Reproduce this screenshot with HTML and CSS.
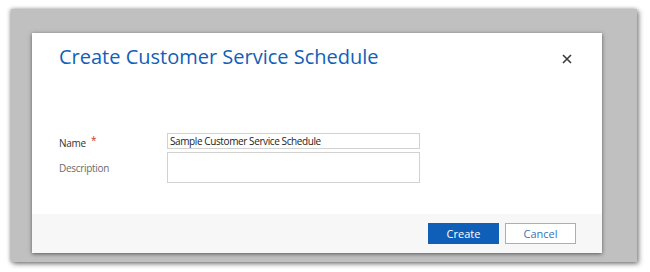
FILE: index.html
```html
<!DOCTYPE html>
<html>
<head>
<meta charset="utf-8">
<link rel="stylesheet" href="styles.css">
</head>
<body>
<div class="backdrop">
  <div class="dialog">
    <div class="dialog-body">
      <div class="header">
        <h1 class="title">Create Customer Service Schedule</h1>
        <button class="close" aria-label="Close">
          <svg width="10" height="10" viewBox="0 0 10 10"><path d="M1 1 L9 9 M9 1 L1 9" stroke="#3a3a3a" stroke-width="1.6" fill="none"/></svg>
        </button>
      </div>
      <div class="form">
        <div class="row">
          <label class="label label-required">Name <span class="req">*</span></label>
          <div class="input input-text">Sample Customer Service Schedule</div>
        </div>
        <div class="row">
          <label class="label label-muted">Description</label>
          <div class="input input-area"></div>
        </div>
      </div>
    </div>
    <div class="footer">
      <button class="btn btn-primary">Create</button>
      <button class="btn btn-secondary">Cancel</button>
    </div>
  </div>
</div>
</body>
</html>
```
FILE: styles.css
```css
html, body {
  margin: 0;
  padding: 0;
  background: #ffffff;
  width: 650px;
  height: 272px;
  overflow: hidden;
}
body {
  padding: 9px 13px 10px 11px;
  box-sizing: border-box;
  font-family: "Open Sans", "Noto Sans", sans-serif;
}
.backdrop {
  width: 626px;
  height: 253px;
  background: #c0c0c0;
  box-shadow: 2px 2px 5px rgba(0,0,0,0.45), -1px 0 4px rgba(0,0,0,0.3);
  box-sizing: border-box;
  padding: 24px 35px 9px 21px;
}
.dialog {
  width: 570px;
  height: 220px;
  background: #ffffff;
  box-shadow: 0 1px 4px rgba(0,0,0,0.55);
  display: flex;
  flex-direction: column;
}
.dialog-body {
  flex: 1;
  padding: 0 26px 0 27px;
}
.header {
  display: flex;
  justify-content: space-between;
  align-items: flex-start;
  padding-top: 9px;
}
.title {
  margin: 0;
  font-weight: 400;
  font-size: 20px;
  line-height: 30px;
  color: #1160b7;
}
.close {
  border: 0;
  background: none;
  padding: 0;
  margin: 12px 4px 0 0;
  width: 10px;
  height: 10px;
  display: flex;
}
.form {
  margin-top: 61px;
  display: flex;
  flex-direction: column;
  gap: 3px;
}
.row {
  display: flex;
  align-items: flex-start;
}
.label {
  width: 108px;
  font-size: 10px;
  line-height: 16px;
  letter-spacing: -0.3px;
}
.label-required {
  color: #333333;
  margin-top: 2px;
  margin-bottom: -2px;
}
.label-muted { color: #6b6b6b; padding-top: 8px; }
.req {
  color: #d0312d;
  margin-left: 3px;
  position: relative;
  top: -3px;
}
.input {
  width: 253px;
  border: 1px solid #d2d2d2;
  box-sizing: border-box;
  background: #fff;
}
.input-text {
  height: 16px;
  font-size: 10px;
  line-height: 14px;
  padding-left: 2px;
  color: #222;
  letter-spacing: -0.4px;
}
.input-area {
  height: 31px;
}
.footer {
  height: 39px;
  background: #f7f7f7;
  display: flex;
  justify-content: flex-end;
  align-items: flex-start;
  padding: 9px 26px 0 0;
  box-sizing: border-box;
  gap: 6px;
}
.btn {
  width: 71px;
  height: 21px;
  font-family: "Open Sans", "Noto Sans", sans-serif;
  font-size: 11px;
  padding: 0;
  box-sizing: border-box;
}
.btn-primary {
  background: #0f5fb9;
  color: #ffffff;
  border: 1px solid #0f5fb9;
}
.btn-secondary {
  background: #ffffff;
  color: #2f74c2;
  border: 1px solid #8ab6e6;
}
```
